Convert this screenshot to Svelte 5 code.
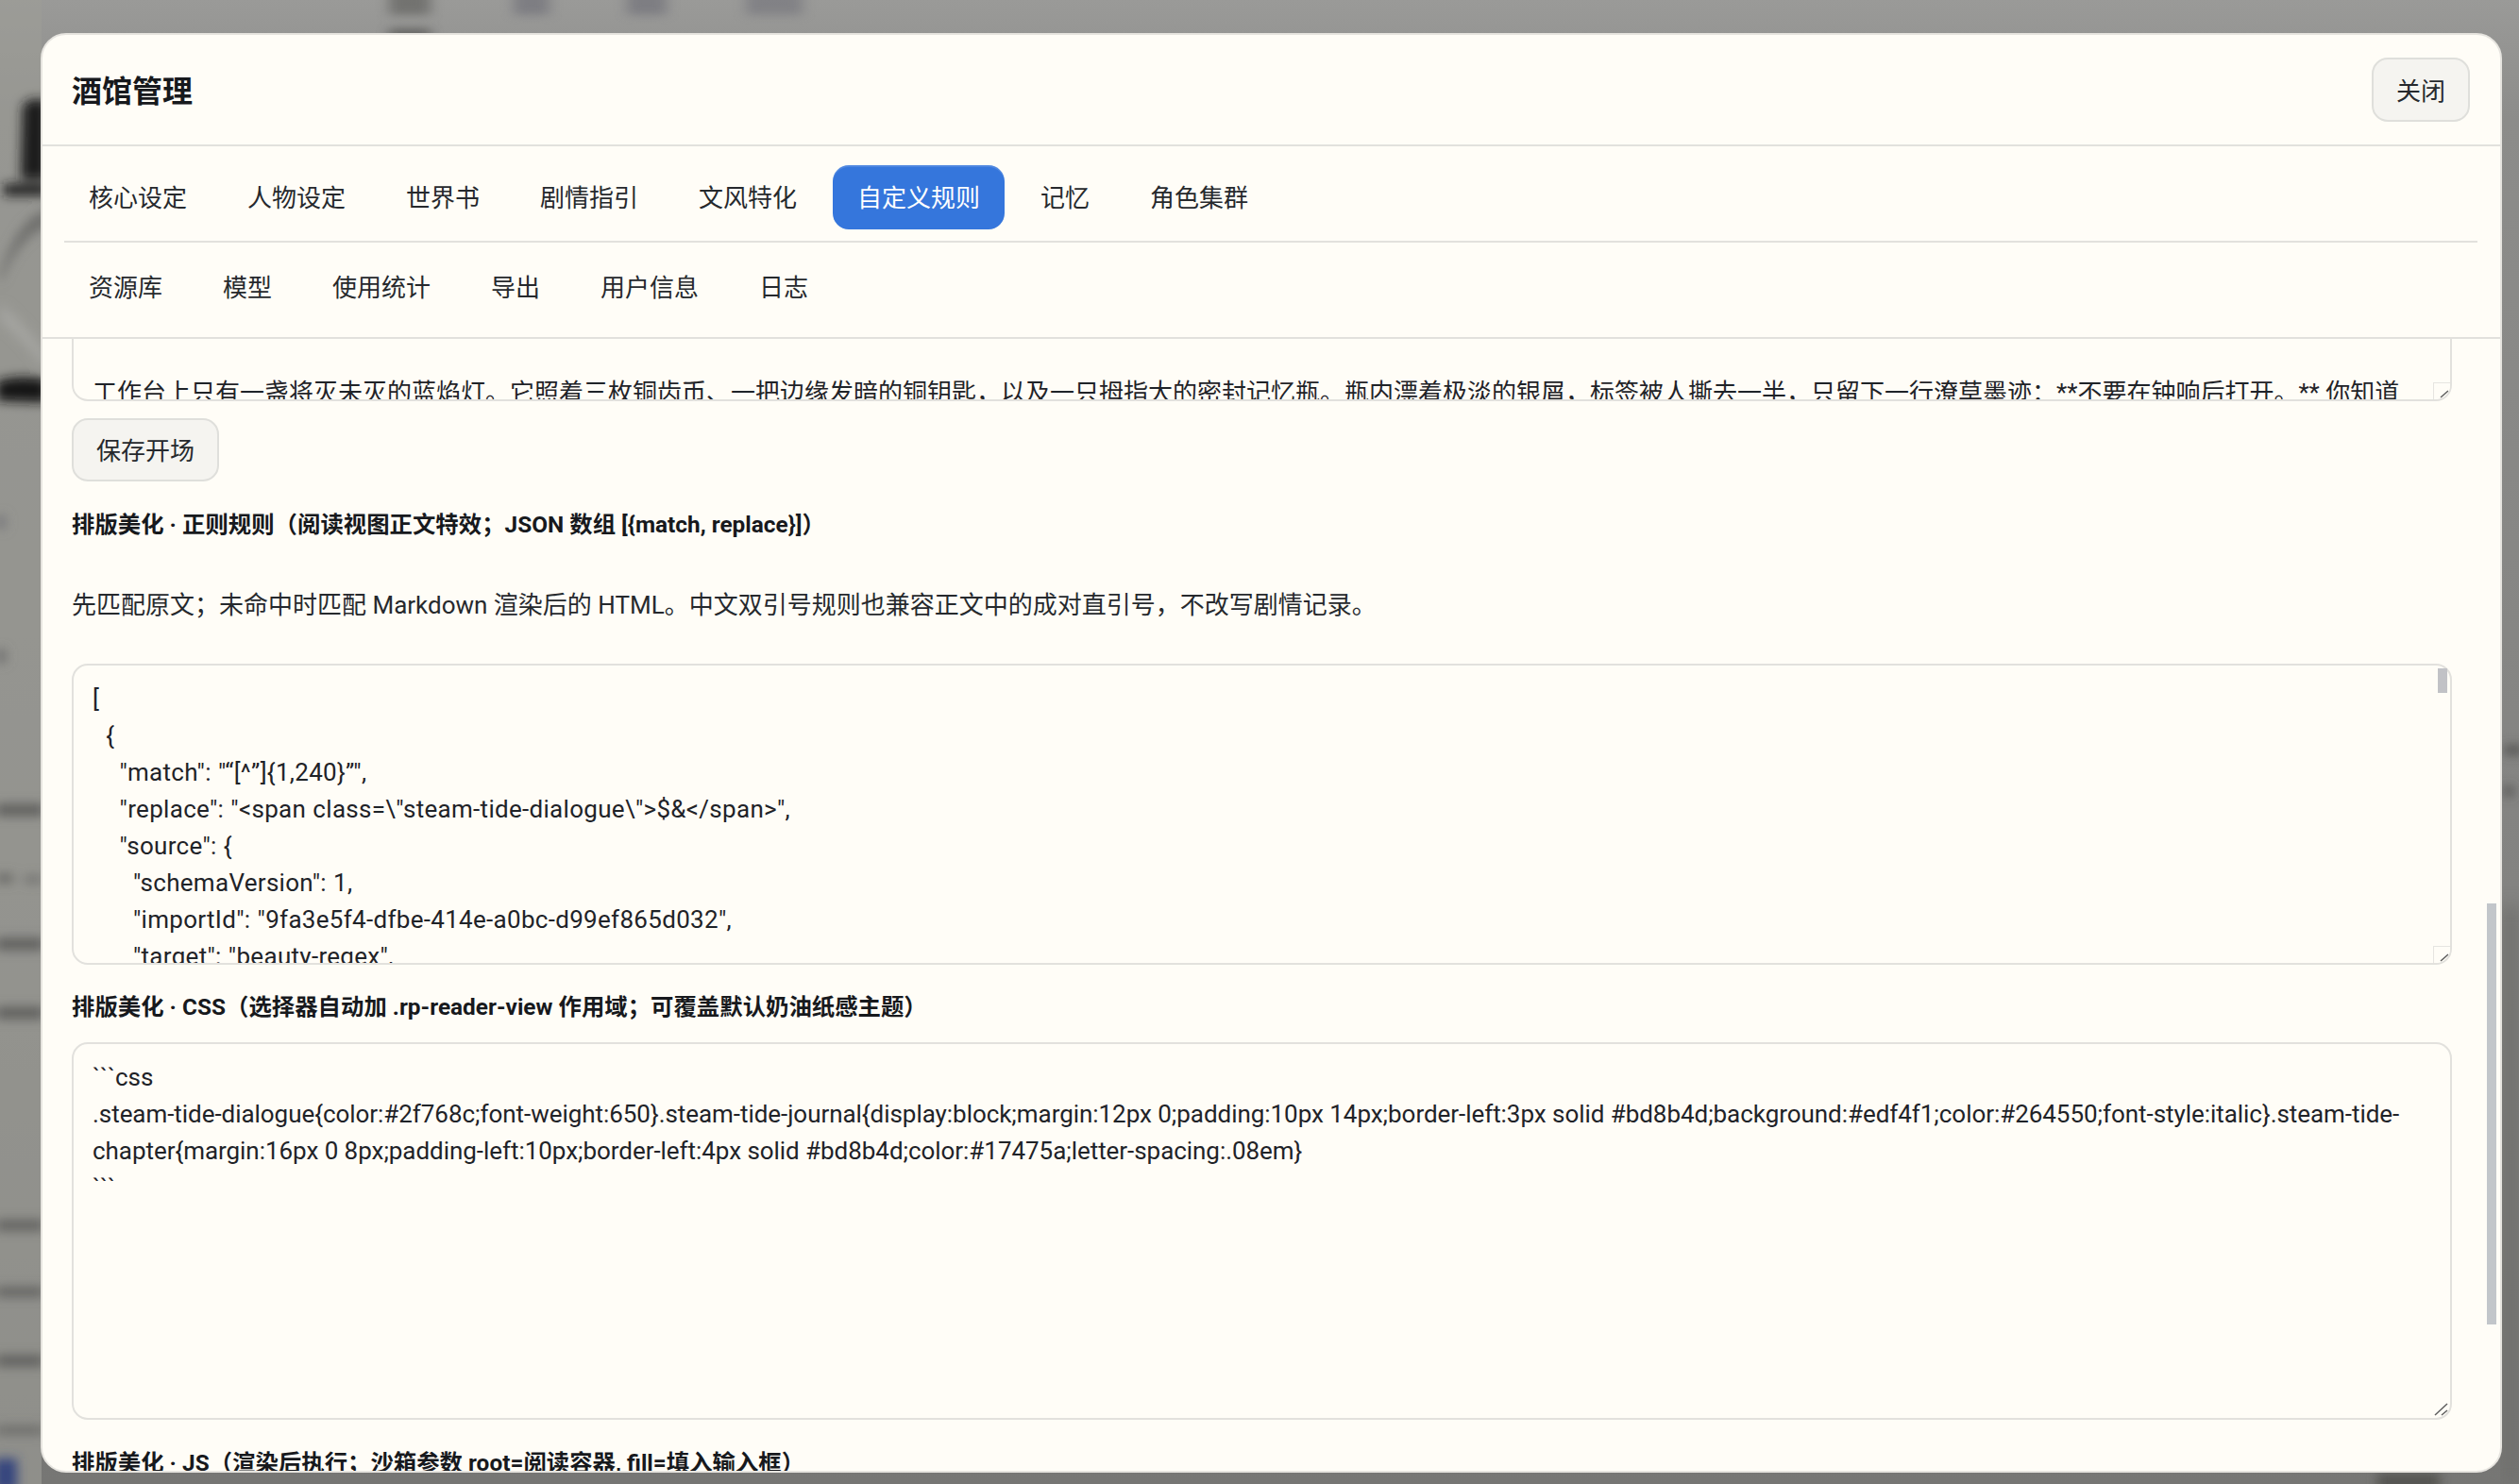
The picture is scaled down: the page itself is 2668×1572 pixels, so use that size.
<script>
  const primary = ['核心设定', '人物设定', '世界书', '剧情指引', '文风特化', '自定义规则', '记忆', '角色集群'];
  const secondary = ['资源库', '模型', '使用统计', '导出', '用户信息', '日志'];
  const opening = '工作台上只有一盏将灭未灭的蓝焰灯。它照着三枚铜齿币、一把边缘发暗的铜钥匙，以及一只拇指大的密封记忆瓶。瓶内漂着极淡的银屑，标签被人撕去一半，只留下一行潦草墨迹：**不要在钟响后打开。** 你知道';
  const regex = `[
  {
    "match": "“[^”]{1,240}”",
    "replace": "<span class=\\"steam-tide-dialogue\\">$&</span>",
    "source": {
      "schemaVersion": 1,
      "importId": "9fa3e5f4-dfbe-414e-a0bc-d99ef865d032",
      "target": "beauty-regex",
      "order": 0
    }
  }
]`;
  const css = '```css\n.steam-tide-dialogue{color:#2f768c;font-weight:650}.steam-tide-journal{display:block;margin:12px 0;padding:10px 14px;border-left:3px solid #bd8b4d;background:#edf4f1;color:#264550;font-style:italic}.steam-tide-chapter{margin:16px 0 8px;padding-left:10px;border-left:4px solid #bd8b4d;color:#17475a;letter-spacing:.08em}\n```';
</script>

{#snippet cornerGrip()}
  <span class="corner">
    <svg width="18" height="18" viewBox="0 0 18 18" aria-hidden="true">
      <path d="M8 16 L16 9 M12 17 L15 14" stroke="#5f5f5f" stroke-width="1.5" fill="none" />
    </svg>
  </span>
{/snippet}

<div class="screen">
  <svg class="backdrop" width="2668" height="1572" viewBox="0 0 2668 1572" aria-hidden="true">
    <defs>
      <linearGradient id="wash" x1="0" y1="0" x2="0" y2="1">
        <stop offset="0" stop-color="#9a9a98" />
        <stop offset="0.08" stop-color="#8c8c8a" />
        <stop offset="0.6" stop-color="#838381" />
        <stop offset="1" stop-color="#767674" />
      </linearGradient>
      <filter id="soft"><feGaussianBlur stdDeviation="6" /></filter>
      <filter id="streak"><feGaussianBlur stdDeviation="7 5" /></filter>
      <filter id="softer"><feGaussianBlur stdDeviation="9" /></filter>
    </defs>
    <rect width="2668" height="1572" fill="url(#wash)" />
    <rect x="0" width="44" height="1572" fill="#9c9c97" opacity="0.65" />
    <g filter="url(#streak)" opacity="0.75">
      <rect x="412" y="-12" width="44" height="28" fill="#666664" />
      <rect x="544" y="-12" width="38" height="28" fill="#75757c" />
      <rect x="664" y="-12" width="42" height="28" fill="#75757c" />
      <rect x="790" y="-12" width="60" height="28" fill="#7a7a80" />
      <rect x="412" y="30" width="44" height="12" fill="#555553" />
    </g>
    <g filter="url(#soft)">
      <path d="M24 112 Q34 100 50 108 L50 190 L22 190 Z" fill="#1c1c1c" />
      <rect x="4" y="195" width="46" height="12" fill="#1c1c1c" />
      <path d="M0 290 Q20 230 50 222 L50 240 Q20 250 0 300 Z" fill="#6e6e6c" />
      <path d="M0 340 Q24 360 50 392 L50 376 Q24 340 0 322 Z" fill="#a4a4a0" />
      <path d="M-4 404 Q20 396 50 402 L50 426 Q20 426 -4 424 Z" fill="#141414" />
      <rect x="-4" y="546" width="10" height="14" fill="#77777a" />
      <rect x="-4" y="688" width="10" height="14" fill="#6c6c6c" />
      <rect x="-4" y="852" width="50" height="12" fill="#5c5c5a" />
      <rect x="-4" y="926" width="18" height="9" fill="#666664" />
      <rect x="26" y="928" width="18" height="7" fill="#6c6c6a" />
      <rect x="-4" y="994" width="50" height="12" fill="#5c5c5a" />
      <rect x="-4" y="1067" width="50" height="12" fill="#5c5c5a" />
      <rect x="-4" y="1293" width="50" height="10" fill="#5c5c5a" />
      <rect x="-4" y="1364" width="50" height="9" fill="#5c5c5a" />
      <rect x="-4" y="1436" width="50" height="11" fill="#5c5c5a" />
      <rect x="-4" y="1511" width="50" height="8" fill="#666664" />
      <rect x="-6" y="1545" width="24" height="36" fill="#34457e" />
      <rect x="2652" y="790" width="20" height="9" fill="#4e4e4c" />
      <rect x="2652" y="833" width="10" height="10" fill="#4e4e4c" />
      <rect x="2518" y="1560" width="66" height="20" fill="#555551" />
    </g>
    <rect x="2650" y="960" width="18" height="612" fill="#6f6f6d" filter="url(#softer)" />
  </svg>

  <section class="modal">
    <header class="head">
      <h1>酒馆管理</h1>
      <button class="btn">关闭</button>
    </header>

    <nav class="tabs first">
      {#each primary as t}
        <button class="tab" class:active={t === '自定义规则'}>{t}</button>
      {/each}
    </nav>
    <nav class="tabs second">
      {#each secondary as t}
        <button class="tab">{t}</button>
      {/each}
    </nav>

    <div class="body">
      <div class="field cut">
        <textarea readonly value={opening}></textarea>
        {@render cornerGrip()}
      </div>
      <button class="btn save">保存开场</button>

      <p class="label one">排版美化 · 正则规则（阅读视图正文特效；JSON 数组 [&#123;match, replace&#125;]）</p>
      <p class="help">先匹配原文；未命中时匹配 Markdown 渲染后的 HTML。中文双引号规则也兼容正文中的成对直引号，不改写剧情记录。</p>
      <div class="field rules">
        <textarea readonly value={regex}></textarea>
        <span class="thumb inner"></span>
        {@render cornerGrip()}
      </div>

      <p class="label two">排版美化 · CSS（选择器自动加 .rp-reader-view 作用域；可覆盖默认奶油纸感主题）</p>
      <div class="field styles">
        <textarea readonly value={css}></textarea>
        <svg class="grip" width="18" height="18" viewBox="0 0 18 18" aria-hidden="true">
          <path d="M2 15 L15 3 M9 15 L15 10" stroke="#5f5f5f" stroke-width="1.5" fill="none" />
        </svg>
      </div>

      <p class="label three">排版美化 · JS（渲染后执行；沙箱参数 root=阅读容器, fill=填入输入框）</p>
      <span class="thumb outer"></span>
    </div>
  </section>
</div>

<style>
  :global(body) {
    margin: 0;
    background: #838381;
  }

  .screen {
    position: relative;
    width: 2668px;
    height: 1572px;
    box-sizing: border-box;
    padding: 35px 18px 12px 43px;
    overflow: hidden;
    font-family: "Roboto", "Noto Sans CJK SC", sans-serif;
    color: #1f2328;
  }

  .backdrop {
    position: absolute;
    inset: 0;
  }

  .modal {
    position: relative;
    display: flex;
    flex-direction: column;
    height: 100%;
    box-sizing: border-box;
    background: #fffdf7;
    border: 2px solid #e6e4df;
    border-radius: 27px;
    overflow: hidden;
  }

  .head {
    display: flex;
    align-items: center;
    justify-content: space-between;
    box-sizing: border-box;
    height: 118px;
    padding: 0 32px 0 31px;
    border-bottom: 2px solid #e2e1dd;
    flex: none;
  }

  h1 {
    margin: 4px 0 0;
    font-size: 32px;
    font-weight: 700;
    line-height: 1.2;
    color: #17191d;
  }

  .btn {
    box-sizing: border-box;
    height: 68px;
    padding: 0 24px 2px;
    font: inherit;
    font-size: 26px;
    color: #26292d;
    background: #f5f4f0;
    border: 2px solid #dfdfdb;
    border-radius: 17px;
  }

  .tabs {
    display: flex;
    gap: 12px;
    flex: none;
    box-sizing: border-box;
    height: 102px;
  }

  .first {
    margin: 0 24px 0 23px;
    padding-top: 20px;
    border-bottom: 2px solid #e2e1dd;
  }

  .second {
    padding: 13px 24px 0 23px;
    border-bottom: 2px solid #e2e1dd;
  }

  .tab {
    box-sizing: border-box;
    height: 68px;
    padding: 0 26px 3px;
    font: inherit;
    font-size: 26px;
    color: #26292d;
    background: transparent;
    border: 0;
    border-radius: 17px;
  }

  .tab.active {
    color: #fff;
    background: #3576dc;
    box-shadow: inset 0 2px 0 rgba(255, 255, 255, 0.13);
  }

  .body {
    position: relative;
    flex: 1;
    min-height: 0;
    overflow: hidden;
    padding: 0 51px 0 31px;
  }

  .field {
    position: relative;
    display: flex;
  }

  textarea {
    flex: 1;
    box-sizing: border-box;
    width: 100%;
    height: 100%;
    padding: 0 20px;
    font: inherit;
    font-size: 26px;
    line-height: 39px;
    color: #1f2328;
    background: #fffdf7;
    border: 2px solid #e2e1dd;
    border-radius: 17px;
    resize: none;
    overflow: hidden;
    outline: none;
    display: block;
  }

  .cut {
    height: 66px;
  }

  .cut textarea {
    padding-top: 38px;
    border-top: 0;
    border-radius: 0 0 17px 17px;
  }

  .rules {
    height: 319px;
  }

  .rules textarea {
    padding-top: 16px;
    letter-spacing: 0.3px;
    word-spacing: 0.4px;
  }

  .styles {
    height: 400px;
  }

  .styles textarea {
    padding-top: 16px;
    letter-spacing: -0.05px;
  }

  .save {
    display: block;
    margin-top: 18px;
    height: 67px;
    padding: 0 24px 2px;
  }

  p {
    margin: 0;
  }

  .label {
    font-size: 24.4px;
    font-weight: 700;
    line-height: 34px;
    color: #17191d;
  }

  .label.one {
    margin-top: 29px;
  }

  .label.two {
    margin-top: 28px;
    margin-bottom: 20px;
  }

  .label.three {
    margin-top: 29px;
  }

  .help {
    margin: 48px 0 42px;
    font-size: 26px;
    line-height: 40px;
    color: #26292d;
  }

  .thumb {
    position: absolute;
    display: block;
    width: 10px;
  }

  .thumb.inner {
    top: 5px;
    right: 5px;
    height: 26px;
    background: #c1c2c6;
  }

  .thumb.outer {
    top: 598px;
    right: 4px;
    height: 446px;
    background: #c2c6ca;
  }

  .grip {
    position: absolute;
    right: 2px;
    bottom: 2px;
  }

  .corner {
    position: absolute;
    right: 2px;
    bottom: 2px;
    box-sizing: border-box;
    width: 18px;
    height: 18px;
    background: #fffdf7;
    border-left: 1px solid #e6e5e1;
    border-top: 1px solid #e6e5e1;
    border-bottom-right-radius: 15px;
    overflow: hidden;
  }

  .corner svg {
    display: block;
    margin: -1px 0 0 -1px;
  }
</style>
